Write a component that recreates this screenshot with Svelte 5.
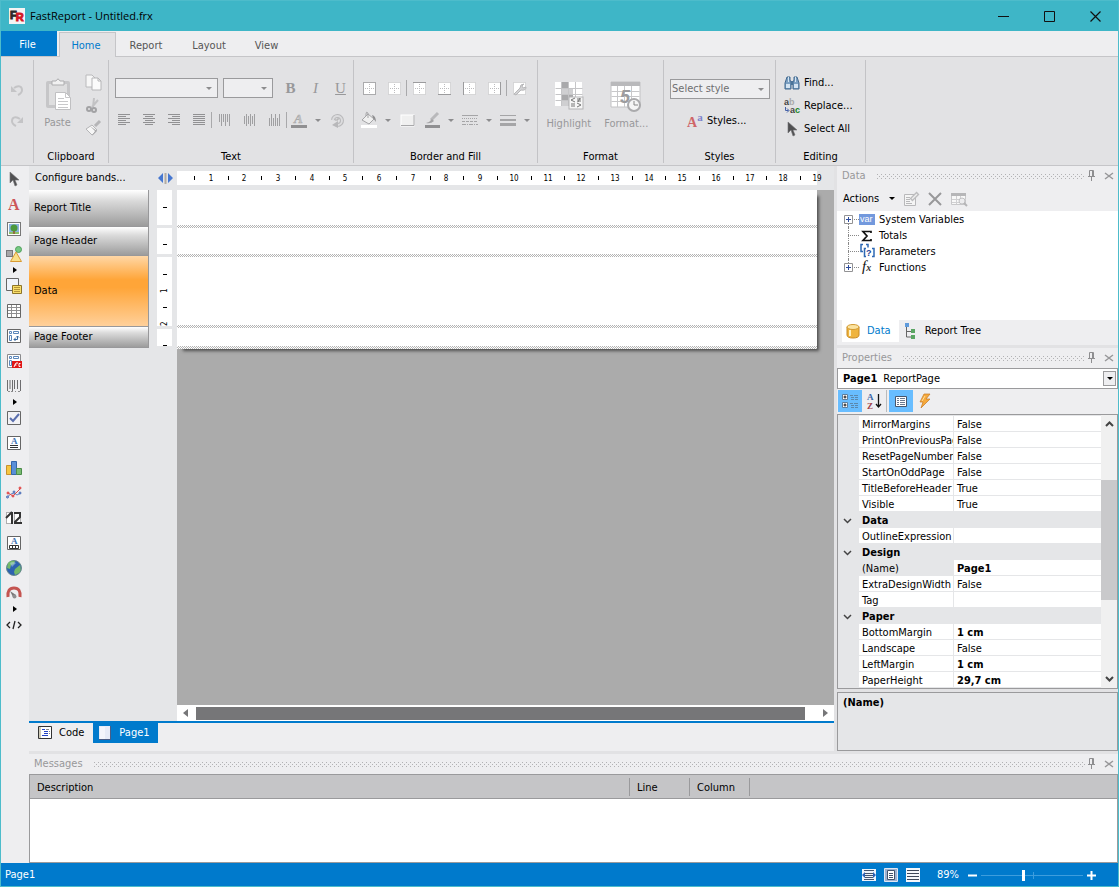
<script lang="ts">
type Tool = { id: string; label: string; more?: boolean };
type Row = { name: string; value?: string; bold?: boolean; group?: boolean; selected?: boolean };

const icons: Record<string, string> = {
  logo: '<rect width="16" height="16" fill="#f4f4f4"/><text x="1" y="11" font-family="Liberation Sans, sans-serif" font-weight="bold" font-size="11" fill="#2b2b2b" stroke="#2b2b2b">F<tspan dx="-1" dy="2" fill="#d41824" stroke="#d41824">R</tspan></text>',
  undo: '<path d="M2 4v6h6z" fill="#c4c4c6"/><path d="M5 6c4-3 8-2 8 2 0 3-2 4-4 5" fill="none" stroke="#c4c4c6" stroke-width="2"/>',
  redo: '<path d="M14 4v6H8z" fill="#c4c4c6"/><path d="M11 6C7 3 3 4 3 8c0 3 2 4 4 5" fill="none" stroke="#c4c4c6" stroke-width="2"/>',
  paste: '<rect x="5" y="3" width="24" height="27" rx="2" fill="#c6c6c8"/><rect x="8" y="6" width="18" height="21" fill="#dededf"/><path d="M11 7V3h4q2-4 4 0h4v4z" fill="#f1f1f1" stroke="#adadaf"/><path d="M14.500 14.500h10l5 5v12h-15z" fill="#fff" stroke="#c0c0c2"/><path d="M24.500 14v5.500h5M17 20.500h6M17 23.500h10M17 26.500h10M17 29.500h10" fill="none" stroke="#c8c8ca"/>',
  copy: '<path d="M1 1h6l3 3v9H1z" fill="#f7f7f7" stroke="#bababc"/><path d="M7 4h6l3 3v9H7z" fill="#fbfbfb" stroke="#b5b5b7"/><path d="M13 4v3h3" fill="none" stroke="#b5b5b7"/>',
  cut: '<path d="M9 1l-1 9M13 3l-6 7" stroke="#c2c2c4" stroke-width="2"/><g fill="none" stroke="#a2a2a4" stroke-width="2"><circle cx="4" cy="12" r="2"/><circle cx="9" cy="13" r="2"/></g>',
  brush: '<path d="M15 1l-5 5" stroke="#b5b5b7" stroke-width="3"/><path d="M7 5l5 5-5 5-6-6z" fill="#f6f6f6" stroke="#b5b5b7"/><path d="M5 6l7 5-5 5 3-5z" fill="#a8a8aa"/>',
  left: '<path d="M2 2.500h12M2 4.500h8M2 6.500h12M2 8.500h8M2 10.500h12M2 12.500h8" stroke="#919193"/>',
  center: '<path d="M2 2.500h12M4 4.500h8M2 6.500h12M4 8.500h8M2 10.500h12M4 12.500h8" stroke="#919193"/>',
  right: '<path d="M2 2.500h12M6 4.500h8M2 6.500h12M6 8.500h8M2 10.500h12M6 12.500h8" stroke="#919193"/>',
  justify: '<path d="M2 2.500h12M2 4.500h12M2 6.500h12M2 8.500h12M2 10.500h12M2 12.500h12" stroke="#919193"/>',
  top: '<path d="M3.500 2v8M5.500 2v12M7.500 2v8M9.500 2v12M11.500 2v8M13.500 2v12" stroke="#a0a0a2"/>',
  middle: '<path d="M3.500 4v8M5.500 2v12M7.500 4v8M9.500 2v12M11.500 4v8M13.500 2v12" stroke="#a0a0a2"/>',
  bottom: '<path d="M3.500 6v8M5.500 2v12M7.500 6v8M9.500 2v12M11.500 6v8M13.500 2v12" stroke="#a0a0a2"/>',
  fontcolor: '<text x="3" y="11" font-family="Liberation Serif, serif" font-size="13" font-style="italic" font-weight="bold" fill="#c4c4c6" stroke="#aaa" stroke-width=".5">A</text><path d="M0 13h16v3H0z" fill="#909092"/>',
  rotate: '<path d="M4 8a4.500 4.500 0 1 1 5 5" fill="none" stroke="#b8b8ba" stroke-width="4"/><path d="M4 8a4.500 4.500 0 1 1 5 5" fill="none" stroke="#dcdcde" stroke-width="2"/><path d="M9 9v7l-6-3z" fill="#b8b8ba"/><path d="M6 8h3V6" fill="none" stroke="#aaa"/>',
  all: '<rect x="2.500" y="2.500" width="12" height="12" fill="#fff" stroke="#ababad"/><path d="M8.500 4v10M4 8.500h10" stroke="#bdbdbf" stroke-dasharray="1 1"/>',
  bnone: '<rect x="2.500" y="2.500" width="12" height="12" fill="#fff" stroke="#bdbdbf" stroke-dasharray="1 1"/><path d="M8.500 4v10M4 8.500h10" stroke="#bdbdbf" stroke-dasharray="1 1"/>',
  btop: '<rect x="2.500" y="2.500" width="12" height="12" fill="#fff" stroke="#bdbdbf" stroke-dasharray="1 1"/><path d="M8.500 4v10M4 8.500h10" stroke="#bdbdbf" stroke-dasharray="1 1"/><path d="M2 2.500h13" stroke="#9b9b9d"/>',
  bbottom: '<rect x="2.500" y="2.500" width="12" height="12" fill="#fff" stroke="#bdbdbf" stroke-dasharray="1 1"/><path d="M8.500 4v10M4 8.500h10" stroke="#bdbdbf" stroke-dasharray="1 1"/><path d="M2 14.500h13" stroke="#9b9b9d"/>',
  bleft: '<rect x="2.500" y="2.500" width="12" height="12" fill="#fff" stroke="#bdbdbf" stroke-dasharray="1 1"/><path d="M8.500 4v10M4 8.500h10" stroke="#bdbdbf" stroke-dasharray="1 1"/><path d="M2.500 2v13" stroke="#9b9b9d"/>',
  bright: '<rect x="2.500" y="2.500" width="12" height="12" fill="#fff" stroke="#bdbdbf" stroke-dasharray="1 1"/><path d="M8.500 4v10M4 8.500h10" stroke="#bdbdbf" stroke-dasharray="1 1"/><path d="M14.500 2v13" stroke="#9b9b9d"/>',
  bprops: '<rect x="2.500" y="2.500" width="12" height="12" fill="#fff" stroke="#bdbdbf" stroke-dasharray="1 1"/><path d="M3 14l6-6q0-4 4-4l-2 2 1 2 3-1q0 4-5 3l-5 5z" fill="#d2d2d4" stroke="#b8b8ba"/>',
  fill: '<path d="M7 2l6 5-5 5-7-4z" fill="#f0f0f0" stroke="#a5a5a7"/><path d="M7 6V1q-2-2-2 1v2" fill="none" stroke="#a5a5a7"/><path d="M11 3q4 1 4 7l-3-4z" fill="#8f8f91"/><path d="M0 13h16v3H0z" fill="#fff"/>',
  rect: '<rect x="2" y="3" width="13" height="11" fill="#f0f0f0" stroke="#fff"/><path d="M2 13.500h13V3" fill="none" stroke="#a8a8aa"/>',
  pen: '<path d="M14 1L7 8" stroke="#b9b9bb" stroke-width="3"/><path d="M8 7l2 2q-3 3-8 2 4-1 6-4z" fill="#a3a3a5"/><path d="M1 13h15v3H1z" fill="#909092"/>',
  dashes: '<path d="M0 3.500h16" stroke="#a5a5a7"/><path d="M0 6.500h16" stroke="#a5a5a7" stroke-dasharray="1 1"/><path d="M0 9.500h16" stroke="#a5a5a7" stroke-dasharray="3 1"/><path d="M0 12.500h16" stroke="#a5a5a7" stroke-dasharray="4 1 1 1"/>',
  widths: '<path d="M0 3.500h16" stroke="#a5a5a7"/><path d="M0 8h16" stroke="#a5a5a7" stroke-width="2"/><path d="M0 12.500h16" stroke="#a5a5a7" stroke-width="3"/>',
  highlight: '<path d="M3 3h27v24H3z" fill="#fff"/><path d="M9 3h7v6H9zM9 15h12v7H9z" fill="#a9a9ab"/><path d="M9 9h12v6H9zM9 22h7v5H9z" fill="#cfcfd1"/><path d="M3.500 9.500h27M3.500 15.500h27M3.500 21.500h27M9.500 3v24M16.500 3v24M23.500 3v24" stroke="#c5c5c7"/><rect x="17" y="18" width="14" height="12" fill="#f6f6f6" stroke="#b3b3b5"/><path d="M23 19l-4 2 4 2M19 25h4M25 20h4M25 22h4M28 19l-2 4M25 24l4 2-4 2M19 27h4" fill="none" stroke="#777"/>',
  format: '<path d="M2 3h29v25H2z" fill="#fff" stroke="#c2c2c4"/><path d="M2 3h29v4H2z" fill="#b9b9bb"/><path d="M2.500 12.500h28M2.500 17.500h28M2.500 22.500h28M8.500 7v21M15.500 7v21M22.500 7v21" stroke="#c8c8ca"/><text x="11" y="24" font-family="Liberation Sans, sans-serif" font-size="18" font-style="italic" font-weight="bold" fill="#9c9c9e">5</text><circle cx="25" cy="26" r="6" fill="#f5f5f5" stroke="#aaaaac" stroke-width="2"/><path d="M25 22v4h4" fill="none" stroke="#888"/>',
  styles: '<text x="0" y="14" font-family="Liberation Serif, serif" font-size="14" font-weight="bold" fill="#cf6668">A<tspan dy="-6" font-size="11" fill="#7d83cc">a</tspan></text>',
  find: '<path d="M3 2h3v3l1 2v7H1V8zM10 2h3l2 6v6H9V7l1-2z" fill="#7ba0c2" stroke="#41688e"/><path d="M2 9h4v4H2zM10 9h4v4h-4z" fill="#d4e4f2"/><path d="M4.500 2v5M11.500 2v5" stroke="#d4e4f2"/><path d="M7 6h2v4H7z" fill="#4a749a"/>',
  replace: '<text x="0" y="7" font-family="Liberation Sans, sans-serif" font-size="9" font-weight="bold" fill="#444">a<tspan fill="#aaa">b</tspan></text><text x="6" y="15" font-family="Liberation Sans, sans-serif" font-size="9" font-weight="bold" fill="#444">a<tspan fill="#18861f">c</tspan></text><path d="M1.500 9v3.500h3M3 10.500l2 2-2 2" fill="none" stroke="#4461a8"/>',
  pointer: '<path d="M4 1v11l3-3 2 6 2-1-2-5h4z" fill="#505052" stroke="#737375" stroke-width=".6"/>',
  text: '<text x="2" y="14" font-family="Liberation Serif, serif" font-size="16" font-weight="bold" fill="#cc5558">A</text>',
  picture: '<rect x="1.500" y="1.500" width="13" height="13" fill="#fff" stroke="#777"/><path d="M3 3h10v10H3z" fill="#8bb4de"/><path d="M3 11h10v2H3z" fill="#8cc066"/><circle cx="8" cy="7" r="3.500" fill="#4c993c"/><path d="M7 10h2v3H7z" fill="#8f6f42"/>',
  shapes: '<rect x="0.500" y="4.500" width="6" height="6" fill="#a6a6a8" stroke="#77777a"/><circle cx="12.500" cy="3.500" r="3" fill="#76c983" stroke="#4f9f5c"/><path d="M10 6l5.500 9.500H4.500z" fill="#f9e089" stroke="#d99a32"/>',
  subreport: '<path d="M.5.500h12v12H.5z" fill="#f0f4fc" stroke="#666"/><path d="M6.500 7.500h9v8h-9z" fill="#f8de68" stroke="#8d752b"/><path d="M8 9.500h6M8 11.500h6M8 13.500h6" stroke="#b5953a"/>',
  table: '<path d="M1.500 1.500h13v13h-13z" fill="#fff" stroke="#666"/><path d="M2 4.500h12M2 7.500h12M2 10.500h12M5.500 2v12M10.500 2v12" stroke="#8e8e90"/>',
  matrix: '<path d="M1.500 1.500h13v13h-13z" fill="#fff" stroke="#666"/><path d="M3.500 3.500h2v2h-2zM7.500 3.500h5v2h-5zM3.500 7.500h2v5h-2z" fill="none" stroke="#5b86ba"/><path d="M11.500 8v3.500H8M9.500 10L8 11.500 9.500 13M10 9.500L11.500 8 13 9.500" fill="none" stroke="#36679e"/>',
  matrixfr: '<path d="M1.500 1.500h13v13h-13z" fill="#fff" stroke="#8a8a8c"/><path d="M3.500 3.500h2v2h-2zM7.500 3.500h5v2h-5zM3.500 7.500h2v5h-2z" fill="none" stroke="#5b86ba"/><path d="M6 8h10v7H6z" fill="#e01515"/><path d="M8 14l2-4h2M8.500 12h2M14.500 10.500h-1.500v3h1.500" fill="none" stroke="#fff"/>',
  barcode: '<path d="M1.500 2v11M4 2v9M6.500 2v11M8.500 2v9M11.500 2v9M14.500 2v11" stroke="#6d6d6f"/><path d="M2 13.500h2M5 13.500h2M9 13.500h1M12 13.500h2" stroke="#8d8d8f"/>',
  check: '<path d="M1.500 1.500h13v13h-13z" fill="#f2f2f5" stroke="#666"/><path d="M4 8l3 3 6-7" fill="none" stroke="#5b6fae" stroke-width="2"/>',
  rich: '<path d="M1.500 1.500h13v13h-13z" fill="#fff" stroke="#666"/><text x="5" y="9" font-family="Liberation Serif, serif" font-size="9" font-weight="bold" fill="#3e73b3">A</text><path d="M4 10.500h8M4 12.500h8" stroke="#333"/>',
  chart: '<path d="M.5 5.500h5v9h-5z" fill="#f6c640" stroke="#c8912d"/><path d="M5.500 1.500h5v13h-5z" fill="#5a8fd8" stroke="#3466aa"/><path d="M10.500 8.500h5v6h-5z" fill="#79bb70" stroke="#4a8b49"/>',
  spark: '<path d="M1 12l4-3 3-1 3 2 4-2" fill="none" stroke="#6586c4"/><path d="M2 8l5 3 4-4 4-4" fill="none" stroke="#dd4a4a"/><g fill="#f7a0a0" stroke="#dd3a3a"><circle cx="2" cy="8" r="1"/><circle cx="7" cy="11" r="1"/><circle cx="14" cy="3" r="1"/></g><g fill="#a5baf0" stroke="#4668b0"><circle cx="1.500" cy="12" r="1"/><circle cx="8" cy="7" r="1"/><circle cx="14" cy="8" r="1"/></g>',
  zip: '<path d="M.5 2.500h6v11h-6z" fill="#fff" stroke="#666" stroke-dasharray="1 1"/><path d="M0 8l6-6M6 2v12" fill="none" stroke="#333" stroke-width="2"/><path d="M8.500 2.500h6v11h-6z" fill="#fff" stroke="#666" stroke-dasharray="1 1"/><path d="M8 3h6v4l-5 5v1h7" fill="none" stroke="#333" stroke-width="2"/>',
  cellular: '<path d="M1.500 1.500h13v13h-13z" fill="#fff" stroke="#666"/><text x="5" y="9" font-family="Liberation Serif, serif" font-size="9" font-weight="bold" fill="#3e73b3">A</text><path d="M3.500 10.500h9v3h-9zM6.500 10v3M9.500 10v3" fill="none" stroke="#333"/>',
  map: '<circle cx="8" cy="8" r="7.500" fill="#2d62b0" stroke="#6a8a90"/><path d="M2 3q3-3 7-2l-1 3-3 1-1 4-3-1zM9 9l5-4q2 5-1 8l-4 2-1-3z" fill="#73b969"/><path d="M4 3q3-2 6 0L6 7z" fill="#bcd9ee" opacity=".5"/>',
  gauge: '<path d="M2 12Q1 3 8 3t6 9" fill="none" stroke="#c45450" stroke-width="3"/><path d="M7 12L4 6l6 4z" fill="#777"/><circle cx="8.500" cy="11.500" r="2" fill="#8e8e90"/>',
  html: '<path d="M4 5L1 8l3 3M12 5l3 3-3 3M9 4l-2 8" fill="none" stroke="#222" stroke-width="1.300"/>',
  edit: '<path d="M1.500 3.500h11v11h-11z" fill="#f5f5f5" stroke="#b8b8ba"/><path d="M3 6.500h4M3 8.500h4M3 10.500h4M3 12.500h6" stroke="#b8b8ba"/><path d="M15 2L8 9" stroke="#bcbcbe" stroke-width="4"/><path d="M14 3L9 8" stroke="#eee" stroke-width="1.500"/>',
  remove: '<path d="M2 2l12 12M14 2L2 14" stroke="#98989a" stroke-width="2"/>',
  view: '<path d="M.5 2.500h14v11H.5z" fill="#f8f8f8" stroke="#c8c8ca"/><path d="M0 2h15v3H0z" fill="#b6b6b8"/><path d="M1 8.500h14M1 11.500h10M5.500 5v8M9.500 5v8" stroke="#d0d0d2"/><circle cx="11" cy="10" r="3" fill="#ececee" stroke="#c0c0c2"/><path d="M13 12l3 3" stroke="#b5b5b7" stroke-width="2"/>',
  sysvar: '<rect y="3" width="16" height="11" fill="#7399dd"/><text x="1" y="11" font-family="Liberation Sans, sans-serif" font-size="9" fill="#fff">var</text>',
  sum: '<path d="M12 6V4.500H4L8 9l-4 4.500h8V12" fill="none" stroke="#111" stroke-width="1.700"/>',
  param: '<path d="M4 1.500H2v7h2M7 1.500h2v3M7 5.500H5.500v8H7M13 5.500h2v8h-2" fill="none" stroke="#2e69b5" stroke-width="1.500"/><text x="7" y="13" font-family="Liberation Sans, sans-serif" font-size="9" font-weight="bold" fill="#1c3f94">?</text>',
  fx: '<text x="3" y="12" font-family="Liberation Serif, serif" font-size="15" font-style="italic" fill="#111">f<tspan font-size="10" font-weight="bold" fill="#333">x</tspan></text>',
  db: '<path d="M2 4v8q0 3 6 3t6-3V4z" fill="#efb43f" stroke="#c98a22"/><ellipse cx="8" cy="4" rx="6" ry="2.500" fill="#fbe3a0" stroke="#d39b33"/><path d="M5 7v6" stroke="#fff1c4" stroke-width="2"/>',
  reptree: '<path d="M3.500 4v10H8M4 8.500h4" fill="none" stroke="#666"/><rect x="2" y="0" width="4" height="4" fill="#5f9bdc"/><rect x="8" y="6" width="4" height="4" fill="#5aa563"/><rect x="8" y="12" width="4" height="4" fill="#5aa563"/>',
  categ: '<path d="M.5 1.500h5v5h-5zM.5 9.500h5v5h-5z" fill="#fff" stroke="#5d7e9c"/><path d="M3 2.500v3M1.500 4h3M3 10.500v3M1.500 12h3" stroke="#111"/><path d="M8 2.500h3M12 2.500h4M9 4.500h3M13 4.500h3M9 6.500h3M13 6.500h3M8 10.500h3M12 10.500h4M9 12.500h3M13 12.500h3M9 14.500h3M13 14.500h3" stroke="#5b88ad"/>',
  sort: '<text x="1" y="7" font-family="Liberation Serif, serif" font-size="9" font-weight="bold" fill="#3a67a8">A</text><text x="1" y="16" font-family="Liberation Serif, serif" font-size="9" font-weight="bold" fill="#a04048">Z</text><path d="M12.500 1v13M10 11l2.500 3 2.500-3" fill="none" stroke="#111" stroke-width="1.300"/>',
  props: '<path d="M2.500 3.500h11v10h-11z" fill="#fff" stroke="#47566c"/><path d="M4 5.500h2M4 7.500h2M4 9.500h2M4 11.500h2M7 5.500h5M7 7.500h5M7 9.500h5M7 11.500h5" stroke="#6a7990"/>',
  events: '<path d="M7 1h6L9 6h4L4 15l2-6H3z" fill="#f6a93c" stroke="#c67a24" stroke-width=".7"/><path d="M8 3L5 8" stroke="#fce0a0"/>',
  code: '<path d="M1.500 1.500h13v12h-13z" fill="#fff" stroke="#333"/><path d="M2 2h2v11H2z" fill="#d0cbb8"/><path d="M5 4.500h3M7 6.500h4M7 8.500h4M5 10.500h6" stroke="#2444c4"/><path d="M9 4.500h3M12 6.500h1M12 8.500h1" stroke="#888"/>',
  page: '<path d="M2 1h11v14H2z" fill="#e6ebf7"/><path d="M2 14.500h11.500V1" fill="none" stroke="#4a5d86"/><path d="M3 2h5v12H3z" fill="#fff" opacity=".5"/>',
  zwidth: '<path d="M1 2h14v12H1z" fill="#eef3fa"/><path d="M3 3.500h10M4 6.500h8M4 8.500h8M4 10.500h8M3 12.500h10" stroke="#44536c"/><path d="M4 5L1 8l3 3zM12 5l3 3-3 3z" fill="#2a62b8"/>',
  zpage: '<path d="M1.500 1.500h13v13h-13z" fill="#9eb2d1" stroke="#dfe7f3"/><path d="M4.500 3.500h7v9h-7z" fill="#fff" stroke="#44536c"/><path d="M6 6.500h4M6 8.500h4M6 10.500h4" stroke="#44536c"/>',
  zfull: '<path d="M1 1h14v14H1z" fill="#f4f7fb"/><path d="M2 3.500h12M2 6.500h12M2 9.500h12M2 12.500h12" stroke="#3d4759"/>',
  pin: '<path d="M4.500 2.500h4v6h-4zM3 8.500h7M6.500 9v4M7.500 3v5" fill="none" stroke="#8e8e90"/>',
  close: '<path d="M4 5l8 6M12 5l-8 6" stroke="#98989a" stroke-width="1.500"/>',
  bands: '<path d="M6 3L1 8l5 5zM11 3l5 5-5 5z" fill="#4677d0"/><path d="M8.500 3v11" stroke="#b3aca2" stroke-width="2"/>'
};

const tools: Tool[] = [
  { id: "pointer", label: "Select" },
  { id: "text", label: "Text" },
  { id: "picture", label: "Picture" },
  { id: "shapes", label: "Shapes", more: true },
  { id: "subreport", label: "Subreport" },
  { id: "table", label: "Table" },
  { id: "matrix", label: "Matrix" },
  { id: "matrixfr", label: "Advanced matrix" },
  { id: "barcode", label: "Barcode", more: true },
  { id: "check", label: "Check box" },
  { id: "rich", label: "Rich text" },
  { id: "chart", label: "Chart" },
  { id: "spark", label: "Sparkline" },
  { id: "zip", label: "Zip code" },
  { id: "cellular", label: "Cellular text" },
  { id: "map", label: "Map" },
  { id: "gauge", label: "Gauge", more: true },
  { id: "html", label: "HTML" }
];

const rows: Row[] = [
  { name: "MirrorMargins", value: "False" },
  { name: "PrintOnPreviousPage", value: "False" },
  { name: "ResetPageNumber", value: "False" },
  { name: "StartOnOddPage", value: "False" },
  { name: "TitleBeforeHeader", value: "True" },
  { name: "Visible", value: "True" },
  { name: "Data", group: true },
  { name: "OutlineExpression", value: "" },
  { name: "Design", group: true },
  { name: "(Name)", value: "Page1", bold: true, selected: true },
  { name: "ExtraDesignWidth", value: "False" },
  { name: "Tag", value: "" },
  { name: "Paper", group: true },
  { name: "BottomMargin", value: "1 cm", bold: true },
  { name: "Landscape", value: "False" },
  { name: "LeftMargin", value: "1 cm", bold: true },
  { name: "PaperHeight", value: "29,7 cm", bold: true }
];

const tree = [
  { id: "sysvar", label: "System Variables", open: true },
  { id: "sum", label: "Totals" },
  { id: "param", label: "Parameters" },
  { id: "fx", label: "Functions", open: true }
];

const bands = ["Report Title", "Page Header", "Data", "Page Footer"];
const menus = ["Report", "Layout", "View"];
const CM = 640 / 19;
const marks = Array.from({ length: 19 }, (_, i) => i + 1);

let selectedBand = $state("Data");
let zoom = $state(89);
</script>

{#snippet icon(name: string, size = 16)}
  <svg class="icon" width={size} height={size} viewBox="0 0 {size} {size}" aria-hidden="true">{@html icons[name]}</svg>
{/snippet}

{#snippet btn(name: string, label: string, split = false)}
  <button class="tb" class:split aria-label={label}>{@render icon(name)}</button>
{/snippet}

{#snippet drop(label: string)}
  <button class="drop" aria-label={label}><i class="down"></i></button>
{/snippet}

{#snippet caption(title: string)}
  <header class="caption">
    <h2>{title}</h2>
    <svg class="grip" height="5" aria-hidden="true">
      <defs>
        <pattern id="grip-{title}" width="4" height="4" patternUnits="userSpaceOnUse">
          <path d="M0 0h1v1H0zM2 2h1v1H2z" fill="#b2b2b4" />
        </pattern>
      </defs>
      <rect width="100%" height="5" fill="url(#grip-{title})" />
    </svg>
    <button aria-label="Auto hide {title}">{@render icon("pin")}</button>
    <button aria-label="Close {title}">{@render icon("close")}</button>
  </header>
{/snippet}

<div class="window">
  <header class="titlebar">
    {@render icon("logo")}
    <h1>FastReport - Untitled.frx</h1>
    <button aria-label="Minimize"><svg width="11" height="11"><path d="M0 5.500h11" stroke="#111" /></svg></button>
    <button aria-label="Maximize"><svg width="11" height="11"><path d="M.5.500h10v10H.5z" fill="none" stroke="#111" /></svg></button>
    <button aria-label="Close"><svg width="11" height="11"><path d="M.5.500l10 10M10.500.500l-10 10" stroke="#111" stroke-width="1.200" /></svg></button>
  </header>

  <nav class="menu">
    <button class="file">File</button>
    <button class="active">Home</button>
    {#each menus as item}
      <button>{item}</button>
    {/each}
  </nav>

  <div class="ribbon">
    <section class="group history">
      <div class="body">
        {@render btn("undo", "Undo")}
        {@render btn("redo", "Redo")}
      </div>
    </section>

    <section class="group clipboard">
      <div class="body">
        <button class="big">{@render icon("paste", 34)}<span>Paste</span></button>
        <div class="stack">
          {@render btn("copy", "Copy")}
          {@render btn("cut", "Cut")}
          {@render btn("brush", "Format painter")}
        </div>
      </div>
      <h3>Clipboard</h3>
    </section>

    <section class="group text">
      <div class="body">
        <div class="line fonts">
          <div class="combo font"><select aria-label="Font" disabled></select><i class="down"></i></div>
          <div class="combo size"><select aria-label="Font size" disabled></select><i class="down"></i></div>
          <div class="line">
            <button class="tb letter" aria-label="Bold"><b>B</b></button>
            <button class="tb letter" aria-label="Italic"><em>I</em></button>
            <button class="tb letter" aria-label="Underline"><u>U</u></button>
          </div>
        </div>
        <div class="line">
          {@render btn("left", "Align left")}
          {@render btn("center", "Align center")}
          {@render btn("right", "Align right")}
          {@render btn("justify", "Justify")}
          {@render btn("top", "Align top", true)}
          {@render btn("middle", "Align middle")}
          {@render btn("bottom", "Align bottom")}
          {@render btn("fontcolor", "Text color", true)}
          {@render drop("Text colors")}
          {@render btn("rotate", "Rotation")}
        </div>
      </div>
      <h3>Text</h3>
    </section>

    <section class="group border">
      <div class="body">
        <div class="line">
          {@render btn("all", "All borders")}
          {@render btn("bnone", "No borders")}
          {@render btn("btop", "Top border", true)}
          {@render btn("bbottom", "Bottom border")}
          {@render btn("bleft", "Left border")}
          {@render btn("bright", "Right border")}
          {@render btn("bprops", "Border properties", true)}
        </div>
        <div class="line">
          {@render btn("fill", "Fill color")}
          {@render drop("Fill colors")}
          {@render btn("rect", "Fill style")}
          {@render btn("pen", "Line color")}
          {@render drop("Line colors")}
          {@render btn("dashes", "Line style")}
          {@render drop("Line styles")}
          {@render btn("widths", "Line width")}
          {@render drop("Line widths")}
        </div>
      </div>
      <h3>Border and Fill</h3>
    </section>

    <section class="group format">
      <div class="body">
        <button class="big">{@render icon("highlight", 34)}<span>Highlight</span></button>
        <button class="big">{@render icon("format", 34)}<span>Format...</span></button>
      </div>
      <h3>Format</h3>
    </section>

    <section class="group styles">
      <div class="body">
        <div class="combo">
          <select aria-label="Style" disabled><option>Select style</option></select><i class="down"></i>
        </div>
        <button class="item">{@render icon("styles")}Styles...</button>
      </div>
      <h3>Styles</h3>
    </section>

    <section class="group editing">
      <div class="body">
        <button class="item">{@render icon("find")}Find...</button>
        <button class="item">{@render icon("replace")}Replace...</button>
        <button class="item">{@render icon("pointer")}Select All</button>
      </div>
      <h3>Editing</h3>
    </section>
  </div>

  <div class="workspace">
    <aside class="toolbox">
      {#each tools as tool}
        <button aria-label={tool.label}>{@render icon(tool.id)}</button>
        {#if tool.more}
          <button class="more" aria-label="More {tool.label}"><i></i></button>
        {/if}
      {/each}
    </aside>

    <div class="docks">
      <main class="designer">
        <div class="surface">
          <div class="bandbar">
            <div class="config">
              <button>Configure bands...</button>
              {@render icon("bands")}
            </div>
            <div class="structure">
              <div class="bands">
                {#each bands as band}
                  <button class:selected={band === selectedBand} onclick={() => (selectedBand = band)}>{band}</button>
                {/each}
              </div>
              <div class="vruler">
                <svg width="15" height="35"><path d="M6 17.500h4" stroke="#000" /></svg>
                <svg width="15" height="26"><path d="M6 16.500h4" stroke="#000" /></svg>
                <svg width="15" height="69">
                  <path d="M6 17.500h4M6 50.500h4" stroke="#000" />
                  <text transform="translate(10 36) rotate(-90)">1</text>
                  <text transform="translate(10 69) rotate(-90)">2</text>
                </svg>
                <svg width="15" height="17"><path d="M6 16.500h4" stroke="#000" /></svg>
              </div>
            </div>
          </div>

          <div class="sheet">
            <svg class="hruler" height="14">
              <rect width="640" height="14" fill="#fff" />
              {#each marks as mark}
                <path d="M{Math.round((mark - 0.5) * CM) + 0.5} 5v4" stroke="#000" />
                <text x={Math.round(mark * CM)} y="10">{mark}</text>
              {/each}
            </svg>
            <div class="canvas">
              <div class="page"><i></i><i></i><i></i><i></i></div>
            </div>
            <div class="hscroll"><i class="prev"></i><span></span><i class="next"></i></div>
          </div>
        </div>
        <div class="pages">
          <button>{@render icon("code")}Code</button>
          <button class="active">{@render icon("page")}Page1</button>
        </div>
      </main>

      <aside class="side">
        <section class="data">
          {@render caption("Data")}
          <div class="actions">
            <button>Actions<i class="down"></i></button>
            <button aria-label="Edit">{@render icon("edit")}</button>
            <button aria-label="Delete">{@render icon("remove")}</button>
            <button aria-label="View data">{@render icon("view")}</button>
          </div>
          <ul class="tree">
            {#each tree as node}
              <li>
                <span class="node">
                  {#if node.open}
                    <svg width="9" height="9"><path d="M.5.500h8v8h-8z" fill="#fff" stroke="#929294" /><path d="M2 4.500h5M4.500 2v5" stroke="#2b4a9c" /></svg>
                  {/if}
                </span>
                {@render icon(node.id)}
                <span>{node.label}</span>
              </li>
            {/each}
          </ul>
          <div class="tabs">
            <button class="active">{@render icon("db")}Data</button>
            <button>{@render icon("reptree")}Report Tree</button>
          </div>
        </section>

        <section class="properties">
          {@render caption("Properties")}
          <div class="object">
            <b>Page1</b><span>ReportPage</span>
            <button aria-label="Choose object"><i class="down"></i></button>
          </div>
          <div class="modes">
            <button class="on" aria-label="Categorized">{@render icon("categ")}</button>
            <button aria-label="Alphabetical">{@render icon("sort")}</button>
            <button class="on second" aria-label="Properties">{@render icon("props")}</button>
            <button aria-label="Events">{@render icon("events")}</button>
          </div>
          <div class="grid">
            <table>
              <colgroup><col class="c-gutter" /><col class="c-name" /><col /></colgroup>
              <tbody>
                {#each rows as row}
                  <tr class:selected={row.selected}>
                    <td class="gutter">
                      {#if row.group}
                        <svg width="9" height="6"><path d="M1 1l3.500 3.500L8 1" fill="none" stroke="#444" stroke-width="1.500" /></svg>
                      {/if}
                    </td>
                    {#if row.group}
                      <th colspan="2">{row.name}</th>
                    {:else}
                      <td class="name">{row.name}</td>
                      <td class="value" class:bold={row.bold}>{row.value}</td>
                    {/if}
                  </tr>
                {/each}
              </tbody>
            </table>
            <div class="vscroll">
              <svg width="9" height="6"><path d="M1 5l3.500-3.500L8 5" fill="none" stroke="#444" stroke-width="2" /></svg>
              <div class="track"><span></span></div>
              <svg width="9" height="6"><path d="M1 1l3.500 3.500L8 1" fill="none" stroke="#444" stroke-width="2" /></svg>
            </div>
          </div>
          <p class="hint">(Name)</p>
        </section>
      </aside>

      <section class="messages">
        {@render caption("Messages")}
        <div class="log">
          <table>
            <thead>
              <tr><th>Description</th><th>Line</th><th>Column</th><th aria-label="More"></th></tr>
            </thead>
          </table>
        </div>
      </section>
    </div>
  </div>

  <footer class="status">
    <span>Page1</span>
    <div class="views">
      <button aria-label="Page width">{@render icon("zwidth")}</button>
      <button aria-label="Whole page">{@render icon("zpage")}</button>
      <button aria-label="100%">{@render icon("zfull")}</button>
    </div>
    <output for="zoom">{zoom}%</output>
    <button aria-label="Zoom out" onclick={() => (zoom -= 1)}><svg width="9" height="9"><path d="M0 4.500h9" stroke="#fff" stroke-width="2" /></svg></button>
    <input id="zoom" type="range" min="25" max="178" aria-label="Zoom" bind:value={zoom} />
    <button aria-label="Zoom in" onclick={() => (zoom += 1)}><svg width="9" height="9"><path d="M0 4.500h9M4.500 0v9" stroke="#fff" stroke-width="2" /></svg></button>
  </footer>
</div>

<style>
:global(body) {
  margin: 0;
}
.window {
  --blue: #007acc;
  --panel: #eeeef0;
  --chrome: #e2e2e4;
  --surface: #e5e6e8;
  --line: #9a9a9c;
  box-sizing: border-box;
  display: flex;
  flex-direction: column;
  height: 100vh;
  border: 1px solid #4dbccb;
  background: var(--panel);
  color: #000;
  font: 11px/16px "DejaVu Sans Condensed", "DejaVu Sans", sans-serif;
  overflow: hidden;
}
h1, h2, h3, p, ul {
  margin: 0;
  padding: 0;
  font: inherit;
}
button {
  padding: 0;
  border: 0;
  background: none;
  color: inherit;
  font: inherit;
  white-space: nowrap;
}
.icon {
  display: block;
  flex: none;
  overflow: visible;
}
.down {
  border: 3px solid transparent;
  border-top-color: #8c8c8e;
  border-bottom: 0;
}

.titlebar {
  display: flex;
  align-items: center;
  height: 30px;
  flex: none;
  padding-left: 8px;
  background: #3eb6c7;
}
.titlebar h1 {
  flex: 1;
  margin-left: 5px;
  font: 11px/16px "Open Sans", "Noto Sans", sans-serif;
}
.titlebar button {
  width: 46px;
  height: 30px;
}
.titlebar button svg {
  display: block;
  margin: 0 auto;
}

.menu {
  display: flex;
  height: 26px;
  flex: none;
  border-bottom: 1px solid #c5c5c8;
  box-sizing: border-box;
}
.menu button {
  width: 63px;
  height: 26px;
  padding: 3px 3px 0 0;
  color: #555;
}
.menu button:last-child {
  width: 52px;
}
.menu .file {
  width: 56px;
  height: 25px;
  margin: 0 2px 0 0;
  background: var(--blue);
  color: #fff;
}
.menu .active {
  width: 57px;
  height: 25px;
  margin-top: 1px;
  padding-top: 1px;
  border: 1px solid #c5c5c8;
  border-bottom: 0;
  background: var(--chrome);
  color: var(--blue);
}

.ribbon {
  display: flex;
  flex: none;
  height: 109px;
  box-sizing: border-box;
  padding: 3px 0 2px;
  border-bottom: 1px solid #c5c5c8;
  background: var(--chrome);
}
.group {
  display: flex;
  flex-direction: column;
  box-sizing: border-box;
  border-right: 1px solid #c3c3c6;
}
.group h3 {
  line-height: 12px;
  text-align: center;
}
.body {
  display: flex;
  flex: 1;
}
.line {
  display: flex;
  align-items: center;
  height: 20px;
}
.tb {
  display: flex;
  align-items: center;
  justify-content: center;
  width: 25px;
  height: 16px;
  box-sizing: border-box;
}
.tb.split {
  border-left: 1px solid #a9a9ab;
}
.drop {
  display: flex;
  align-items: center;
  justify-content: center;
  width: 13px;
  height: 16px;
}
.letter {
  color: #98989a;
  font: 15px/16px "Liberation Serif", serif;
}
.big {
  display: flex;
  flex-direction: column;
  align-items: center;
  gap: 3px;
  color: #98989a;
}
.item {
  display: flex;
  align-items: center;
  gap: 4px;
  height: 23px;
}
.combo {
  position: relative;
  display: flex;
  height: 20px;
  box-sizing: border-box;
  border: 1px solid var(--line);
  background: #eeeef0;
}
.combo select {
  width: 100%;
  padding: 0 14px 0 1px;
  border: 0;
  appearance: none;
  background: none;
  color: #6f6f71;
  font: inherit;
  opacity: 1;
}
.combo .down {
  position: absolute;
  right: 5px;
  top: 8px;
}
.history {
  width: 33px;
}
.history .body {
  flex-direction: column;
  align-items: center;
  gap: 15px;
  padding-top: 22px;
}
.clipboard {
  width: 75px;
}
.clipboard .body {
  gap: 7px;
  padding: 14px 0 0 8px;
}
.clipboard .big {
  width: 31px;
  align-self: start;
  margin-top: 4px;
}
.clipboard .stack {
  display: flex;
  flex-direction: column;
  gap: 7px;
}
.text {
  width: 245px;
}
.text .body, .border .body {
  flex-direction: column;
  gap: 12px;
  padding: 18px 0 0 2px;
}
.fonts {
  gap: 5px;
  padding-left: 4px;
}
.font {
  width: 103px;
}
.size {
  width: 50px;
}
.border {
  width: 184px;
}
.format {
  width: 126px;
}
.format .body {
  justify-content: space-around;
  padding: 19px 8px 0 2px;
}
.format .big {
  width: 56px;
  align-self: start;
}
.styles {
  width: 112px;
}
.styles .body {
  flex-direction: column;
  gap: 10px;
  padding: 19px 5px 0 6px;
}
.styles .item {
  padding-left: 17px;
}
.editing {
  width: 90px;
}
.editing .body {
  flex-direction: column;
  align-items: start;
  padding: 11px 0 0 8px;
}

.workspace {
  display: flex;
  flex: 1;
  min-height: 0;
}
.toolbox {
  display: flex;
  flex-direction: column;
  width: 28px;
  flex: none;
}
.toolbox button {
  display: flex;
  align-items: center;
  justify-content: center;
  height: 25px;
  flex: none;
  padding-right: 2px;
}
.toolbox .more {
  height: 7px;
  padding: 0;
}
.more i {
  border: 3px solid transparent;
  border-left: 4px solid #000;
  border-right: 0;
}
.docks {
  display: grid;
  flex: 1;
  min-width: 0;
  grid-template: minmax(0, 1fr) 112px / minmax(0, 1fr) 281px;
  gap: 0 3px;
  background: var(--chrome);
}
.designer {
  display: flex;
  flex-direction: column;
  min-width: 0;
  background: var(--panel);
}
.surface {
  display: flex;
  flex: 1;
  min-height: 0;
  background: var(--surface);
}
.bandbar {
  width: 148px;
  flex: none;
}
.config {
  display: flex;
  align-items: center;
  justify-content: space-between;
  height: 24px;
  padding: 0 4px 0 6px;
}
.structure {
  display: flex;
  gap: 8px;
}
.bands {
  display: grid;
  grid-template-rows: 37px 29px 71px 21px;
  width: 120px;
}
.bands button {
  padding: 0 5px;
  border: solid #98989a;
  border-width: 0 1px 1px 0;
  background: linear-gradient(#fff, #dadada 30%, #9c9c9c);
  text-align: left;
}
.bands button.selected {
  background: linear-gradient(#ffd7a6, #ffa538 34%, #ffa538 45%, #ffd09a);
}
.vruler {
  display: flex;
  flex-direction: column;
  gap: 3px;
}
.vruler svg {
  background: #fff;
}
.vruler text, .hruler text {
  font-size: 8px;
}
.hruler text {
  text-anchor: middle;
}
.sheet {
  display: flex;
  flex: 1;
  flex-direction: column;
  min-width: 0;
  padding-top: 5px;
}
.hruler {
  width: 100%;
  flex: none;
  margin-bottom: 5px;
}
.canvas {
  flex: 1;
  min-height: 0;
  background: #ababab;
  overflow: hidden;
}
.page {
  display: grid;
  grid-template-rows: 38px 29px 71px 21px;
  width: 640px;
  background: #fff;
  box-shadow: 4px 4px 3px -2px #505050;
}
.page i {
  align-self: end;
  height: 3px;
  background: repeating-conic-gradient(#b4b4b4 0 25%, #fff 0 50%) 0 0 / 2px 2px;
}
.hscroll {
  display: flex;
  align-items: center;
  gap: 8px;
  height: 16px;
  padding: 0 6px;
  background: #fff;
}
.hscroll span {
  flex: 1;
  height: 13px;
  margin-right: 10px;
  background: #767678;
}
.hscroll i {
  border: 4px solid transparent;
}
.hscroll .prev {
  border-right: 5px solid #767678;
  border-left: 0;
}
.hscroll .next {
  border-left: 5px solid #767678;
  border-right: 0;
}
.pages {
  display: flex;
  height: 28px;
  border-top: 2px solid var(--blue);
}
.pages button {
  display: flex;
  align-items: center;
  gap: 6px;
  height: 20px;
  padding: 0 9px 0 8px;
}
.pages .active {
  padding: 0 8px 0 4px;
  background: var(--blue);
  color: #fff;
}

.side {
  display: flex;
  flex-direction: column;
  gap: 3px;
  min-height: 0;
}
.caption {
  display: flex;
  align-items: center;
  height: 20px;
  flex: none;
  padding-left: 5px;
  color: #98989a;
}
.caption h2 {
  margin-right: 11px;
  line-height: 18px;
}
.grip {
  flex: 1;
  min-width: 0;
}
.caption button:last-child {
  margin-right: 1px;
}
.data, .properties, .messages {
  background: var(--panel);
}
.actions {
  display: flex;
  align-items: center;
  gap: 8px;
  height: 25px;
  padding-left: 6px;
}
.actions button:first-child {
  display: flex;
  align-items: center;
  gap: 10px;
}
.actions .down, .object .down {
  border-top-color: #000;
}
.tree {
  height: 109px;
  background: #fff;
  line-height: 18px;
  list-style: none;
}
.tree li {
  display: flex;
  gap: 4px;
  height: 16px;
  padding-left: 7px;
}
.node {
  position: relative;
  width: 11px;
}
.node::before {
  position: absolute;
  top: 8px;
  left: 4px;
  width: 11px;
  border-top: 1px dotted #888;
  content: "";
}
.node::after {
  position: absolute;
  top: 0;
  left: 4px;
  height: 16px;
  border-left: 1px dotted #888;
  content: "";
}
li:first-child .node::after {
  top: 8px;
  height: 8px;
}
li:last-child .node::after {
  height: 8px;
}
.node svg {
  position: absolute;
  z-index: 1;
  top: 4px;
  left: 0;
}
.tabs {
  display: flex;
  height: 25px;
  padding-left: 5px;
}
.tabs button {
  display: flex;
  align-items: center;
  gap: 6px;
  height: 22px;
  padding: 0 8px 0 3px;
}
.tabs .active {
  background: #fff;
  color: var(--blue);
}
.tabs button:last-child {
  padding-left: 4px;
}

.properties {
  display: flex;
  flex: 1;
  flex-direction: column;
  min-height: 0;
}
.object {
  display: flex;
  align-items: center;
  gap: 6px;
  height: 19px;
  flex: none;
  padding: 0 1px 0 5px;
  border: 1px solid var(--line);
  background: #fff;
}
.object button {
  display: flex;
  align-items: center;
  justify-content: center;
  width: 13px;
  height: 15px;
  margin-left: auto;
  border: 1px solid var(--line);
  background: var(--panel);
}
.modes {
  display: flex;
  height: 22px;
  flex: none;
  padding: 1px 1px 2px;
}
.modes button {
  display: flex;
  align-items: center;
  justify-content: center;
  width: 24px;
}
.modes .on {
  background: #68bdff;
}
.modes .second {
  margin-left: 3px;
  box-shadow: -2px 0 var(--panel), -3px 0 #bbb;
}
.grid {
  display: flex;
  flex: 1;
  min-height: 0;
  border: 1px solid var(--line);
  background: var(--surface);
  overflow: hidden;
}
.grid table {
  width: 100%;
  min-width: 0;
  align-self: start;
  margin-top: 1px;
  border-spacing: 0;
  table-layout: fixed;
}
.c-gutter {
  width: 21px;
}
.c-name {
  width: 94px;
}
.grid td, .grid th {
  height: 13px;
  padding: 2px 3px 0;
  border-bottom: 1px solid var(--surface);
  line-height: 13px;
  text-align: left;
  white-space: nowrap;
  overflow: hidden;
}
.grid .gutter {
  padding-left: 5px;
}
.gutter svg {
  display: block;
}
.grid .name {
  padding-right: 0;
  background: #fff;
}
.grid .value {
  border-left: 1px solid var(--surface);
  background: #fff;
}
.grid .selected .name {
  background: var(--surface);
}
.bold, .hint {
  font-weight: bold;
}
.vscroll {
  display: flex;
  flex-direction: column;
  flex: none;
  align-items: center;
  width: 16px;
  padding: 6px 0;
  background: #f0f0f0;
}
.track {
  display: flex;
  flex: 1;
  width: 100%;
  flex-direction: column;
  justify-content: flex-end;
}
.track span {
  height: 48%;
  margin: 0 0 76px;
  background: #c9c9cb;
}
.hint {
  height: 55px;
  flex: none;
  margin-top: 3px;
  padding: 2px 5px 0;
  border: 1px solid var(--line);
  background: var(--surface);
  box-shadow: 0 -3px var(--chrome);
}

.messages {
  display: flex;
  grid-column: 1 / -1;
  flex-direction: column;
  margin-top: 3px;
}
.log {
  flex: 1;
  border: 1px solid var(--line);
  background: #fff;
}
.log table {
  width: 100%;
  border-spacing: 0;
  table-layout: fixed;
  background: #c5c5c7;
}
.log th {
  width: 60px;
  height: 24px;
  box-sizing: border-box;
  padding: 2px 7px 0;
  border-bottom: 1px solid var(--line);
  background: linear-gradient(var(--line), var(--line)) 100% 50% / 1px 18px no-repeat;
  font-weight: normal;
  text-align: left;
}
.log th:first-child {
  width: 600px;
}
.log th:last-child {
  width: auto;
  background: none;
}

.status {
  display: flex;
  align-items: center;
  height: 22px;
  flex: none;
  padding: 1px 22px 0 4px;
  background: var(--blue);
  color: #fff;
}
.views {
  display: flex;
  gap: 6px;
  margin: 0 16px 0 auto;
}
.status output {
  width: 31px;
}
.status svg {
  display: block;
}
.status input {
  width: 102px;
  height: 13px;
  margin: 0 4px;
  appearance: none;
  background:
    linear-gradient(#3d9ddd, #3d9ddd) 52px 50% / 1px 7px no-repeat,
    linear-gradient(#3d9ddd, #3d9ddd) 0 50% / 100% 1px no-repeat;
}
.status input::-webkit-slider-thumb {
  width: 3px;
  height: 11px;
  appearance: none;
  background: #fff;
}
</style>
